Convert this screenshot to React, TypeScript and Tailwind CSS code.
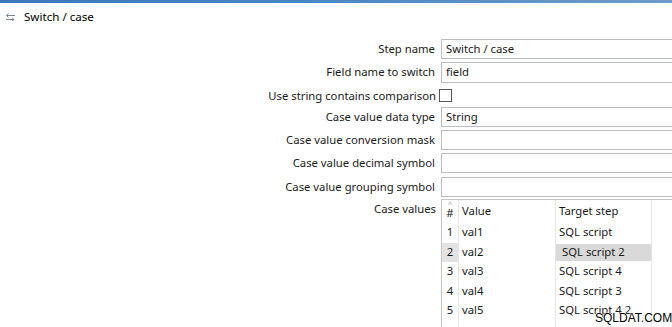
import React from "react";

const font = { fontFamily: '"Noto Sans", "Open Sans", Arial, sans-serif' };

const fields = [
  { label: "Step name", value: "Switch / case", cls: "h-[20px]" },
  { label: "Field name to switch", value: "field", cls: "mt-[3px] h-[21px]" },
];

const moreFields = [
  { label: "Case value data type", value: "String", cls: "h-[20px]" },
  { label: "Case value conversion mask", value: "", cls: "mt-[3px] h-[20px]" },
  { label: "Case value decimal symbol", value: "", cls: "mt-[3px] h-[20px]" },
  { label: "Case value grouping symbol", value: "", cls: "mt-[4px] h-[20px]" },
];

const cases = [
  { n: 1, value: "val1", target: "SQL script" },
  { n: 2, value: "val2", target: "SQL script 2", selected: true },
  { n: 3, value: "val3", target: "SQL script 4" },
  { n: 4, value: "val4", target: "SQL script 3" },
  { n: 5, value: "val5", target: "SQL script 4 2" },
];

function SwapIcon() {
  return (
    <svg width="11" height="8" viewBox="0 0 11 8" fill="none" stroke="#7a8899" strokeWidth="1">
      <path d="M10 2.5H1.5M3.5 0.5L1.5 2.5L3.5 4.5" />
      <path d="M1 6.5H9M7 4.8L9 6.5L7 8" />
    </svg>
  );
}

function Row({ label, value, cls }: { label: string; value: string; cls: string }) {
  return (
    <div className={`flex items-center ${cls}`}>
      <div className="w-[436px] shrink-0 pr-[1px] text-right">{label}</div>
      <div className="ml-[5px] flex h-full w-[260px] shrink-0 items-center border border-[#b9bcc2] pl-[4px]">
        {value}
      </div>
    </div>
  );
}

export default function App() {
  return (
    <div
      className="relative h-[327px] w-[672px] overflow-hidden bg-white text-[11.3px] text-[#1a1a1a]"
      style={font}
    >
      <div className="h-[3px] bg-gradient-to-r from-[#3b78bd] via-[#4d88c6] to-[#6f9cc8]" />
      <div className="flex h-[26px] items-center pl-[5px] pt-[2px]">
        <SwapIcon />
        <span className="ml-[8px] text-[11.6px] text-black">Switch / case</span>
      </div>

      <div className="mt-[10px] flex flex-col">
        {fields.map((f) => (
          <Row key={f.label} {...f} />
        ))}

        <div className="flex h-[24px] items-center">
          <div className="w-[436px] shrink-0 pt-[2px] text-right">Use string contains comparison</div>
          <div className="ml-[3px] mt-[1px] h-[13px] w-[13px] border border-[#555]" />
        </div>

        {moreFields.map((f) => (
          <Row key={f.label} {...f} />
        ))}

        <div className="mt-[2px] flex">
          <div className="w-[436px] shrink-0 pt-[2px] text-right">Case values</div>
          <div className="ml-[5px] h-[140px] w-[260px] shrink-0 border-l border-t border-[#c3c5c9]">
            <div className="flex h-[23px] items-center">
              <div className="relative flex h-full w-[17px] items-center justify-center border-r border-[#e6e6e6]">
                <span className="absolute top-[1px] text-[7px] leading-none text-[#999]">^</span>
                <span className="mt-[4px]">#</span>
              </div>
              <div className="flex h-full w-[97px] items-center border-r border-[#e6e6e6] pl-[3px]">Value</div>
              <div className="flex h-full w-[96px] items-center border-r border-[#e6e6e6] pl-[3px]">Target step</div>
            </div>
            {cases.map((c) => (
              <div key={c.n} className="flex h-[19.5px] items-center">
                <div
                  className={`flex h-full w-[17px] items-center justify-center border-r border-[#e6e6e6] ${
                    c.selected ? "bg-[#e3e3e3]" : ""
                  }`}
                >
                  {c.n}
                </div>
                <div className="flex h-full w-[97px] items-center border-r border-[#e6e6e6] pl-[3px]">{c.value}</div>
                <div className="flex h-full w-[96px] items-center border-r border-[#e6e6e6]">
                  {c.selected ? (
                    <div className="flex h-[17px] w-full items-center bg-[#d9d9d9] pl-[6px]">{c.target}</div>
                  ) : (
                    <span className="pl-[3px]">{c.target}</span>
                  )}
                </div>
              </div>
            ))}
            <div className="flex h-full">
              <div className="w-[17px] border-r border-[#e6e6e6]" />
              <div className="w-[97px] border-r border-[#e6e6e6]" />
              <div className="w-[96px] border-r border-[#e6e6e6]" />
            </div>
          </div>
        </div>
      </div>

      <div
        className="absolute left-[595px] top-[309px] text-[12px] text-black"
        style={{ fontFamily: '"Liberation Sans", Arial, sans-serif', textShadow: "0 0 2px #fff, 0 0 2px #fff" }}
      >
        SQLDAT.COM
      </div>
    </div>
  );
}
